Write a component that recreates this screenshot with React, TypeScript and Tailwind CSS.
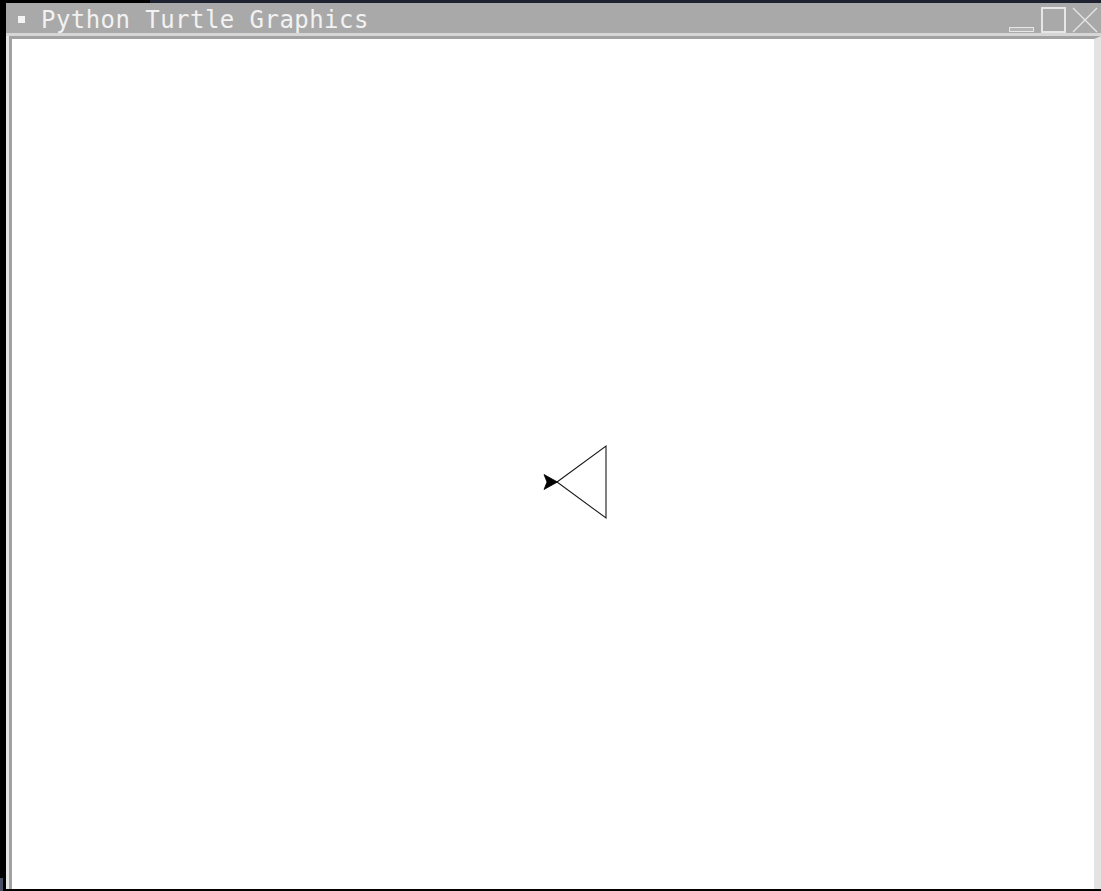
export default function App() {
  return (
    <div className="w-[1101px] h-[891px] bg-black flex flex-col overflow-hidden">
      <div className="h-[3px] flex">
        <div className="w-[150px] bg-black" />
        <div className="flex-1 bg-[#1e2130]" />
      </div>
      <div className="flex-1 flex min-h-0">
        <div className="w-[6px] flex flex-col justify-end">
          <div className="w-[3px] h-[13px] bg-[#4a5064]" />
        </div>
        <div className="flex-1 flex flex-col min-w-0">
          {/* title bar */}
          <div className="h-[30px] bg-[#a9a9a9] flex items-center pl-[12px]">
            <div className="w-[7px] h-[7px] bg-[#f4f4f4] mr-[16px] mt-[2px]" />
            <span
              className="text-[#f2f2f2] text-[24px] tracking-[0.45px] leading-none mt-[3px]"
              style={{ fontFamily: '"DejaVu Sans Mono", monospace' }}
            >
              Python Turtle Graphics
            </span>
            <div className="ml-auto flex items-stretch h-full mr-[1px]">
              <div className="w-[32px] flex items-end pb-[1px] pl-[3px]">
                <div className="w-[25px] h-[5px] border border-[#e6e6e6] bg-[#b4b4b4]" />
              </div>
              <div className="w-[31px] flex items-center pl-[3px]">
                <div className="w-[25px] h-[26px] border-2 border-[#e6e6e6] mt-[3px]" />
              </div>
              <div className="w-[31px] flex items-center pl-[3px]">
                <svg width="26" height="26" viewBox="0 0 26 26" className="mt-[3px]">
                  <path d="M1 1 L25 25 M25 1 L1 25" stroke="#e6e6e6" strokeWidth="1.3" fill="none" />
                </svg>
              </div>
            </div>
          </div>
          <div className="h-[3px] bg-[#d6d6d6]" />
          {/* canvas frame */}
          <div className="flex-1 flex flex-col border-l-[3px] border-[#e6e6e6] min-h-0">
            <div className="flex-1 relative bg-white border-t-[3px] border-l-[3px] border-[#a2a2a2] border-r-[7px] border-r-[#e3e3e3] min-h-0">
              <svg className="absolute inset-0" width="1082" height="848" viewBox="12 39 1082 848">
                <polygon points="557,482 606,446 606,518" fill="none" stroke="#1a1a1a" strokeWidth="1.1" />
                <polygon points="557.5,482 544,474.5 547,482 544,489.5" fill="#000" stroke="#000" strokeWidth="0.8" strokeLinejoin="round" />
              </svg>
            </div>
          </div>
          <div className="h-[2px] bg-black" />
        </div>
      </div>
    </div>
  );
}
